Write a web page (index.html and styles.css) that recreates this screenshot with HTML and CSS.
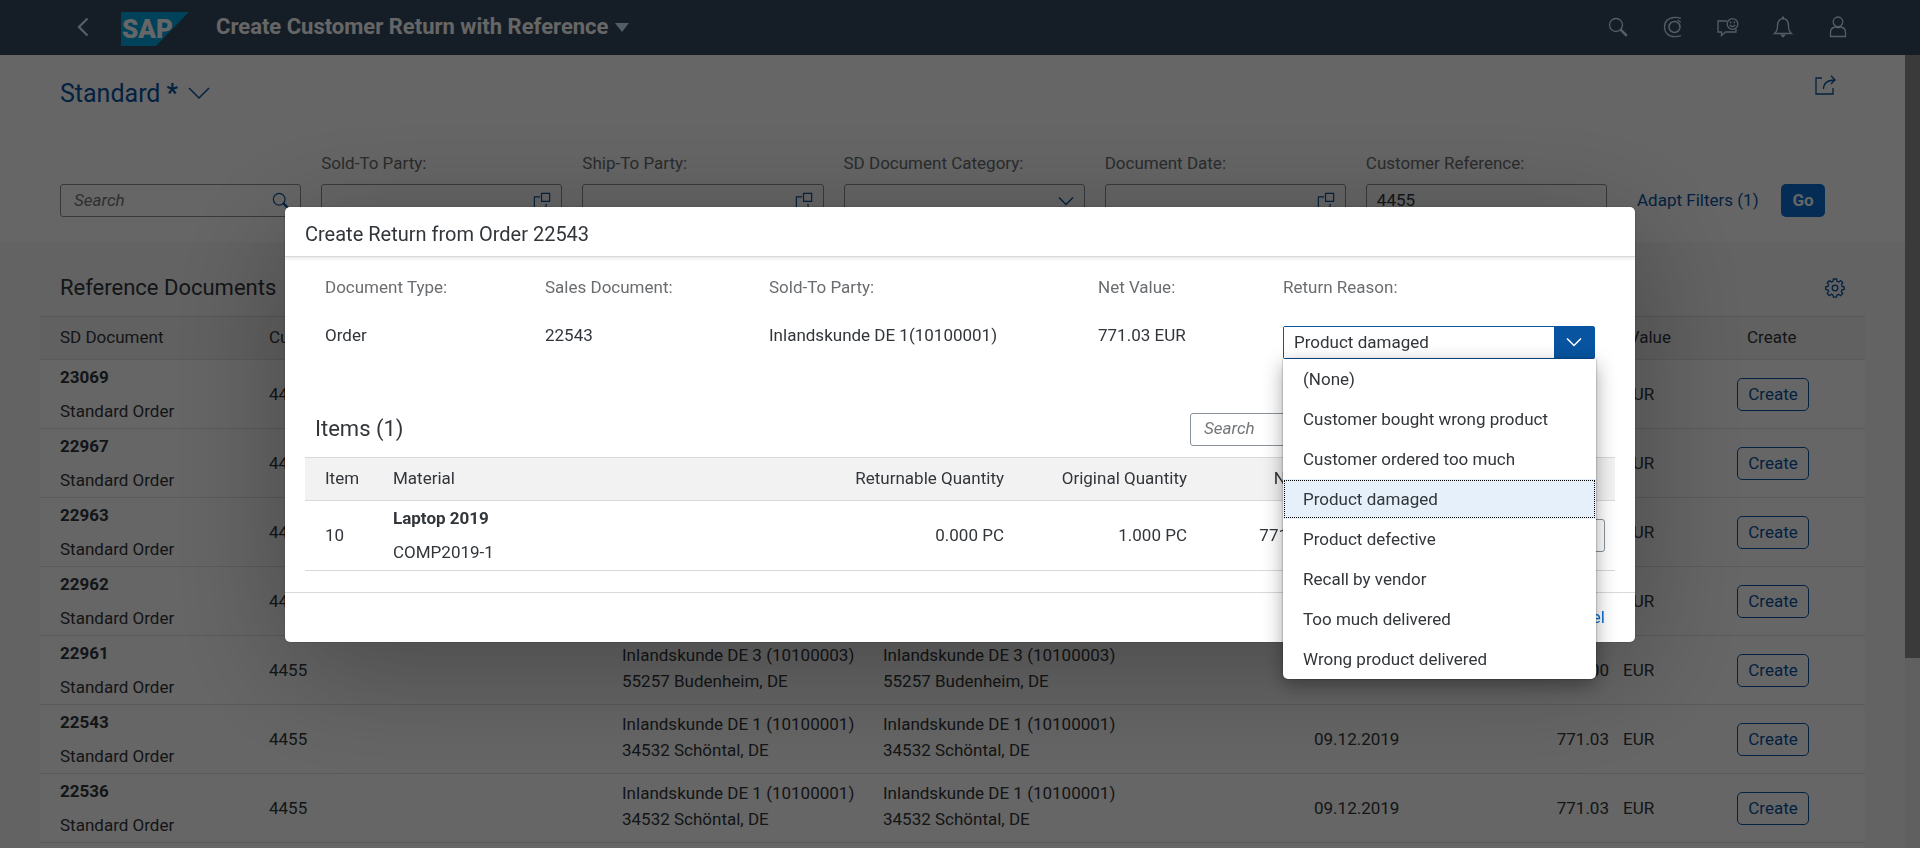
FILE: index.html
```html
<!DOCTYPE html>
<html lang="en">
<head>
<meta charset="utf-8">
<title>Create Customer Return with Reference</title>
<link rel="stylesheet" href="styles.css">
</head>
<body>
<svg class="defs" aria-hidden="true">
  <symbol id="i-search" viewBox="0 0 20 20"><circle cx="8" cy="8" r="6.500" fill="none" stroke="currentColor" stroke-width="1.300"/><path d="M12.800 12.800 18 18" stroke="currentColor" stroke-width="2.600" stroke-linecap="round"/></symbol>
  <symbol id="i-down" viewBox="0 0 16 16"><path d="M1 4.500l7 7 7-7" fill="none" stroke="currentColor" stroke-width="1.500"/></symbol>
  <symbol id="i-help" viewBox="0 0 20 20"><path d="M8 5.500H1.500v13h13V13M9.500 1.500h9v9h-9z" fill="none" stroke="currentColor" stroke-width="1.300"/></symbol>
</svg>

<div class="app">
  <header class="shell">
    <button class="icon-btn back" aria-label="Back"><svg width="12" height="20" viewBox="0 0 12 20"><path d="M10.500 1.500 2 10l8.500 8.500" fill="none" stroke="currentColor" stroke-width="2.400"/></svg></button>
    <div class="logo" aria-label="SAP"><svg width="68" height="34" viewBox="0 0 68 34"><path d="M0 0h68L35 34H0z" fill="#00a5e0"/></svg><span>SAP</span></div>
    <button class="shell-title">Create Customer Return with Reference<span class="caret"></span></button>
    <nav class="shell-icons">
      <button class="icon-btn" aria-label="Search"><svg width="20" height="20"><use href="#i-search"/></svg></button>
      <button class="icon-btn" aria-label="CoPilot"><svg width="20" height="22" viewBox="0 0 20 22"><path d="M18 2.500Q15.500 1.300 12 1.300C5.500 1.300 1.500 5.500 1.500 11s4 9.700 10.500 9.700q3.500 0 6-1.200M14.500 4q2.300.8 3.300 2.500" fill="none" stroke="currentColor" stroke-width="1.300"/><circle cx="11.500" cy="11" r="5.500" fill="none" stroke="currentColor" stroke-width="1.500"/></svg></button>
      <button class="icon-btn" aria-label="Feedback"><svg width="22" height="20" viewBox="0 0 22 20"><path d="M10 4H1v11h3.500v3.500L8.500 15H19v-3" fill="none" stroke="currentColor" stroke-width="1.300"/><circle cx="15.500" cy="7" r="5.300" fill="none" stroke="currentColor" stroke-width="1.300"/><path d="M12.800 7.800q2.700 3.500 5.400 0M13.700 4.500v1.700M17.300 4.500v1.700" fill="none" stroke="currentColor" stroke-width="1.300"/></svg></button>
      <button class="icon-btn" aria-label="Notifications"><svg width="20" height="22" viewBox="0 0 20 22"><path d="M1.500 17.500Q4.500 15 4.500 10 4.500 3 10 2.500 15.500 3 15.500 10q0 5 3 7.500z" fill="none" stroke="currentColor" stroke-width="1.300"/><path d="M7 18.500h6L10 21.800zM9 .5h2v2H9z" fill="currentColor"/></svg></button>
      <button class="icon-btn" aria-label="User"><svg width="18" height="22" viewBox="0 0 18 22"><circle cx="9" cy="5.800" r="4.800" fill="none" stroke="currentColor" stroke-width="1.300"/><path d="M1.500 20.500v-4q0-4.500 4.500-5.500 3 1.500 6 0 4.500 1 4.500 5.500v4z" fill="none" stroke="currentColor" stroke-width="1.300"/></svg></button>
    </nav>
  </header>

  <div class="body">
    <main class="main">
      <section class="filters">
        <div class="variant-row">
          <button class="variant">Standard <b>*</b><svg width="22" height="22" viewBox="0 0 22 22"><path d="M1 5l10 10L21 5" fill="none" stroke="currentColor" stroke-width="1.500"/></svg></button>
          <button class="icon-btn share" aria-label="Share"><svg width="21" height="20" viewBox="0 0 21 20"><path d="M7 3H1v16h17v-6" fill="none" stroke="currentColor" stroke-width="1.300"/><path d="M8.500 14q0-8.500 11-9M16 .8l4 4.200-4 4" fill="none" stroke="currentColor" stroke-width="1.300"/></svg></button>
        </div>
        <form class="filter-row">
          <div class="field"><div class="box"><input class="ph" type="text" placeholder="Search" aria-label="Search"><svg class="end" width="18" height="18"><use href="#i-search"/></svg></div></div>
          <div class="field"><label class="lbl" for="f1">Sold-To Party:</label><div class="box"><input id="f1" type="text"><svg class="end" width="18" height="18"><use href="#i-help"/></svg></div></div>
          <div class="field"><label class="lbl" for="f2">Ship-To Party:</label><div class="box"><input id="f2" type="text"><svg class="end" width="18" height="18"><use href="#i-help"/></svg></div></div>
          <div class="field"><label class="lbl" for="f3">SD Document Category:</label><div class="box"><select id="f3"><option></option></select><svg class="end" width="16" height="16"><use href="#i-down"/></svg></div></div>
          <div class="field"><label class="lbl" for="f4">Document Date:</label><div class="box"><input id="f4" type="text"><svg class="end" width="18" height="18"><use href="#i-help"/></svg></div></div>
          <div class="field"><label class="lbl" for="f5">Customer Reference:</label><div class="box"><input id="f5" type="text" value="4455"></div></div>
          <button type="button" class="adapt">Adapt Filters (1)</button>
          <button type="button" class="go">Go</button>
        </form>
      </section>

      <section class="docs">
        <div class="docs-head">
          <h2>Reference Documents</h2>
          <button class="icon-btn gear" aria-label="Settings"><svg width="20" height="20" viewBox="0 0 20 20"><path d="M8.400 1h3.200l.4 2.300 1.700.7 2-1.400 2.100 2.200-1.300 1.900.7 1.700 2 .4v2.600l-2.200.5-.7 1.700 1.400 2-2.200 2.100-1.900-1.400-1.700.8-.4 2.100H8.400L8 17l-1.700-.7-1.900 1.300-2.200-2.100 1.400-2-.7-1.700-2.200-.4V8.800l2.200-.4.7-1.700-1.300-2 2.100-2.100 2 1.400L8 3.300z" fill="none" stroke="currentColor" stroke-width="1.300"/><circle cx="10" cy="10" r="2.800" fill="none" stroke="currentColor" stroke-width="1.300"/></svg></button>
        </div>
        <table class="doc-table">
          <colgroup><col class="c1"><col class="c2"><col class="c3"><col class="c4"><col class="c5"><col class="c6"><col class="c7"><col class="c8"></colgroup>
          <thead><tr><th>SD Document</th><th>Customer</th><th></th><th></th><th></th><th class="num net" colspan="2">Net Value</th><th>Create</th></tr></thead>
          <tbody>
            <tr><td class="id"><b>23069</b><span>Standard Order</span></td><td>4455</td><td></td><td></td><td></td><td></td><td>EUR</td><td><button class="create">Create</button></td></tr>
            <tr><td class="id"><b>22967</b><span>Standard Order</span></td><td>4455</td><td></td><td></td><td></td><td></td><td>EUR</td><td><button class="create">Create</button></td></tr>
            <tr><td class="id"><b>22963</b><span>Standard Order</span></td><td>4455</td><td></td><td></td><td></td><td></td><td>EUR</td><td><button class="create">Create</button></td></tr>
            <tr><td class="id"><b>22962</b><span>Standard Order</span></td><td>4455</td><td></td><td></td><td></td><td></td><td>EUR</td><td><button class="create">Create</button></td></tr>
            <tr><td class="id"><b>22961</b><span>Standard Order</span></td><td>4455</td><td>Inlandskunde DE 3 (10100003)<br>55257 Budenheim, DE</td><td>Inlandskunde DE 3 (10100003)<br>55257 Budenheim, DE</td><td></td><td class="num">00</td><td>EUR</td><td><button class="create">Create</button></td></tr>
            <tr><td class="id"><b>22543</b><span>Standard Order</span></td><td>4455</td><td>Inlandskunde DE 1 (10100001)<br>34532 Schöntal, DE</td><td>Inlandskunde DE 1 (10100001)<br>34532 Schöntal, DE</td><td>09.12.2019</td><td class="num">771.03</td><td>EUR</td><td><button class="create">Create</button></td></tr>
            <tr><td class="id"><b>22536</b><span>Standard Order</span></td><td>4455</td><td>Inlandskunde DE 1 (10100001)<br>34532 Schöntal, DE</td><td>Inlandskunde DE 1 (10100001)<br>34532 Schöntal, DE</td><td>09.12.2019</td><td class="num">771.03</td><td>EUR</td><td><button class="create">Create</button></td></tr>
            <tr><td></td><td></td><td></td><td></td><td></td><td></td><td></td><td></td></tr>
          </tbody>
        </table>
      </section>
    </main>
    <div class="scrollbar"><div class="thumb"></div></div>
  </div>
</div>

<div class="scrim">
  <div class="dialog" role="dialog" aria-labelledby="dlg-title">
    <h1 id="dlg-title" class="dlg-head">Create Return from Order 22543</h1>
    <div class="dlg-body">
      <div class="info">
        <div><span class="k">Document Type:</span><span>Order</span></div>
        <div><span class="k">Sales Document:</span><span>22543</span></div>
        <div><span class="k">Sold-To Party:</span><span>Inlandskunde DE 1(10100001)</span></div>
        <div><span class="k">Net Value:</span><span>771.03 EUR</span></div>
        <div class="reason">
          <label class="k" for="reason">Return Reason:</label>
          <div class="combo">
            <input id="reason" type="text" value="Product damaged" role="combobox" aria-expanded="true" aria-controls="reasons">
            <button class="combo-btn" aria-label="Open list"><svg width="16" height="16"><use href="#i-down"/></svg></button>
            <ul id="reasons" class="menu" role="listbox">
              <li role="option">(None)</li>
              <li role="option">Customer bought wrong product</li>
              <li role="option">Customer ordered too much</li>
              <li role="option" class="sel" aria-selected="true">Product damaged</li>
              <li role="option">Product defective</li>
              <li role="option">Recall by vendor</li>
              <li role="option">Too much delivered</li>
              <li role="option">Wrong product delivered</li>
            </ul>
          </div>
        </div>
      </div>
      <div class="items-head">
        <h2>Items (1)</h2>
        <div class="box"><input class="ph" type="text" placeholder="Search" aria-label="Search items"></div>
      </div>
      <table class="item-table">
        <colgroup><col class="i1"><col class="i2"><col class="i3"><col class="i4"><col class="i5"><col class="i6"></colgroup>
        <thead><tr><th>Item</th><th>Material</th><th class="num">Returnable Quantity</th><th class="num">Original Quantity</th><th class="num">Net Value</th><th></th></tr></thead>
        <tbody><tr><td>10</td><td class="id"><b>Laptop 2019</b><span>COMP2019-1</span></td><td class="num">0.000 PC</td><td class="num">1.000 PC</td><td class="num">771.03 EUR</td><td><div class="box"><input type="text" aria-label="Return quantity"></div></td></tr></tbody>
      </table>
    </div>
    <footer class="dlg-foot"><button class="cancel">Cancel</button></footer>
  </div>
</div>
</body>
</html>
```
FILE: styles.css
```css
* { box-sizing: border-box; }
body { margin: 0; height: 100vh; overflow: hidden; font: 17px/26px Roboto, "Liberation Sans", sans-serif; color: #32363a; }
h1, h2 { margin: 0; font-weight: 400; }
button, input, select { font: inherit; color: inherit; margin: 0; }
button { background: none; border: 0; padding: 0; cursor: pointer; white-space: nowrap; }
svg { display: block; flex: none; }
.defs { position: absolute; width: 0; height: 0; }

.app { height: 100vh; display: flex; flex-direction: column; overflow: hidden; }
.shell { height: 55px; flex: none; background: #354a5f; color: #d1e8ff; display: flex; align-items: center; padding: 0 64px 1px 77px; }
.icon-btn { display: flex; align-items: center; justify-content: center; }
.logo { margin-left: 32px; display: grid; align-items: center; padding-top: 3px; }
.logo > * { grid-area: 1 / 1; }
.logo span { font: 900 26px/34px Roboto, sans-serif; color: #fff; padding-left: 1px; }
.shell-title { margin-left: 27px; font-size: 22px; font-weight: 700; color: #fff; display: flex; align-items: center; gap: 7px; }
.caret { border: 7px solid transparent; border-top: 9px solid #d1e8ff; border-bottom: 0; }
.shell-icons { margin-left: auto; display: flex; gap: 19px; }
.shell-icons .icon-btn { width: 36px; }

.body { flex: 1; display: flex; min-height: 0; }
.main { flex: 1; min-width: 0; background: #f7f7f7; }
.scrollbar { width: 15px; background: #f1f1f1; flex: none; }
.thumb { height: 76%; background: #919191; }

.filters { background: #fff; height: 187px; padding: 0 80px 0 60px; }
.variant-row { display: flex; justify-content: space-between; align-items: flex-start; }
.variant { display: flex; align-items: center; gap: 6px; font-size: 25px; line-height: 40px; padding-top: 19px; color: #0854a0; }
.variant svg { margin-left: 4px; }
.share { color: #0854a0; padding-top: 20px; margin-right: -11px; }
.filter-row { display: flex; align-items: flex-end; gap: 20px; margin-top: 36px; }
.field { flex: 1; min-width: 0; }
.lbl { display: block; height: 34px; color: #6a6d70; white-space: nowrap; }
.box { display: flex; align-items: center; height: 33px; background: #fff; border: 1px solid #89919a; border-radius: 3px; padding: 0 10px; }
.box input, .box select { flex: 1; min-width: 0; width: 100%; border: 0; outline: 0; background: none; padding: 0 0 2px; appearance: none; }
.box .ph { padding-left: 3px; }
.ph::placeholder { color: #74777a; font-style: italic; opacity: 1; }
.box .end { color: #0854a0; }
.adapt { color: #0854a0; height: 33px; margin-left: 10px; width: 124px; text-align: left; padding-bottom: 2px; }
.go { background: #0a6ed1; color: #fff; font-weight: 700; height: 33px; width: 44px; border-radius: 5px; padding-bottom: 2px; }

.docs { padding: 0 40px; }
.docs-head { display: flex; justify-content: space-between; align-items: center; height: 74px; padding: 18px 20px 0; }
.docs-head h2 { font-size: 22px; line-height: 30px; }
.gear { color: #0854a0; }
table { width: 100%; border-collapse: collapse; table-layout: fixed; }
th, td { text-align: left; font-weight: 400; padding: 0; white-space: nowrap; }
th { padding-bottom: 2px; }
.num { text-align: right; }
.doc-table { background: #fff; border-top: 1px solid #d9d9d9; }
.doc-table th { height: 43px; background: #f2f2f2; }
.doc-table tr { border-bottom: 1px solid #e0e0e0; }
.doc-table td { height: 69px; }
.doc-table th:first-child, .doc-table td:first-child { padding-left: 20px; }
.doc-table .net { padding-right: 76px; }
.c1 { width: 229px; } .c2 { width: 353px; } .c3 { width: 261px; } .c5 { width: 180px; } .c6 { width: 115px; } .c7 { width: 138px; } .c8 { width: 118px; }
.doc-table td:nth-child(3), .doc-table td:nth-child(4) { padding-bottom: 5px; }
.doc-table td:nth-child(7) { padding-left: 14px; }
.id b, .id span { display: block; line-height: 34px; }
.create { height: 33px; width: 72px; border: 1px solid #0854a0; border-radius: 5px; color: #0854a0; margin-left: -10px; }

.scrim { position: fixed; inset: 0; background: rgba(0, 0, 0, .6); display: flex; align-items: center; justify-content: center; }
.dialog { width: 1350px; max-width: 92%; background: #fff; border-radius: 5px; box-shadow: 0 0 2px rgba(0, 0, 0, .3), 0 25px 125px rgba(0, 0, 0, .3); }
.dlg-head { font-size: 20px; line-height: 30px; padding: 12px 20px 7px; border-bottom: 1px solid #d9d9d9; box-shadow: 0 2px 3px rgba(0, 0, 0, .08); }
.dlg-body { padding: 0 20px 21px; }
.info { display: grid; grid-template-columns: 220px 224px 329px 185px 1fr; padding: 17px 20px 0; }
.info > div > span { display: block; }
.k { display: block; color: #6a6d70; margin-bottom: 22px; }
.combo { position: relative; display: flex; width: 312px; height: 33px; border: 1px solid #0854a0; border-radius: 2px; margin-top: 26px; }
.combo input { flex: 1; min-width: 0; border: 0; outline: 0; padding: 0 10px; background: #fff; }
.combo-btn { width: 40px; display: grid; place-items: center; background: #0854a0; color: #fff; }
.menu { position: absolute; top: 32px; left: -1px; width: 313px; margin: 0; padding: 0; list-style: none; background: #fff; border-radius: 0 0 5px 5px; box-shadow: 0 0 2px rgba(0, 0, 0, .5), 0 6px 20px rgba(0, 0, 0, .35); z-index: 2; }
.menu li { height: 40px; line-height: 40px; padding: 0 20px; }
.menu .sel { background: #e5f0fa; outline: 1px dotted #000; outline-offset: -2px; }
.items-head { display: flex; justify-content: space-between; align-items: center; margin: 54px 10px 11px; }
.items-head h2 { font-size: 22px; }
.items-head .box { width: 380px; margin-right: 35px; }
.item-table { border-top: 1px solid #d9d9d9; }
.item-table th { height: 43px; background: #f2f2f2; }
.item-table tr { border-bottom: 1px solid #d9d9d9; }
.item-table td { height: 70px; }
.item-table th:first-child, .item-table td:first-child { padding-left: 20px; }
.i1 { width: 88px; } .i3 { width: 200px; } .i4 { width: 183px; } .i5 { width: 160px; } .i6 { width: 268px; }
.item-table .box { margin: 0 10px 0 20px; }
.dlg-foot { border-top: 1px solid #d9d9d9; height: 50px; padding: 0 30px; display: flex; align-items: center; justify-content: flex-end; }
.cancel { color: #0a6ed1; }
```
